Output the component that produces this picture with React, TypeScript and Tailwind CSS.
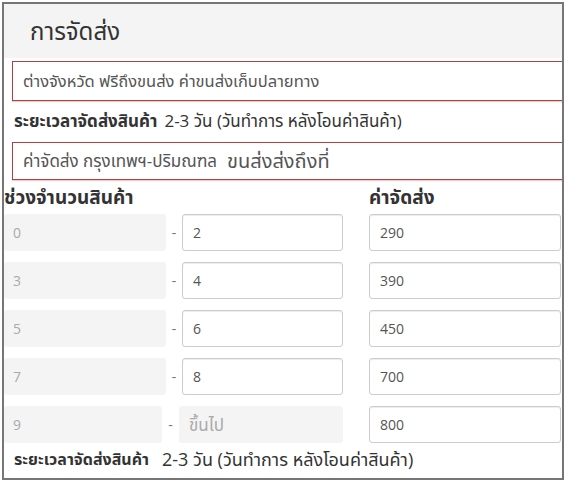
const rows = [
  { from: "0", to: "2", cost: "290" },
  { from: "3", to: "4", cost: "390" },
  { from: "5", to: "6", cost: "450" },
  { from: "7", to: "8", cost: "700" },
];

const font = "font-['Open_Sans','Noto_Sans_Thai','Noto_Sans',sans-serif]";

export default function App() {
  return (
    <div className={`w-[569px] h-[490px] bg-white ${font}`}>
      <div className="ml-[2px] mt-[2px] w-[562px] h-[478px] border-2 border-[#767676] overflow-hidden text-[#333]">
        {/* header */}
        <div className="h-[54px] bg-[#f4f4f4] pl-[26px] flex items-center text-[24px] text-[#333]">
          การจัดส่ง
        </div>

        <div className="ml-[8px] mt-[3px] w-[600px] h-[40px] border border-[#a94442] shadow-[0_1px_1px_rgba(169,68,66,0.25)] flex items-center pl-[10px] text-[16.5px] text-[#555]">
          ต่างจังหวัด ฟรีถึงขนส่ง ค่าขนส่งเก็บปลายทาง
        </div>

        <div className="ml-[10px] h-[40px] flex items-center">
          <span className="font-bold text-[17px]">ระยะเวลาจัดส่งสินค้า</span>
          <span className="ml-[7px] text-[17px]">2-3 วัน (วันทำการ หลังโอนค่าสินค้า)</span>
        </div>

        <div className="ml-[8px] mt-[1px] w-[600px] h-[38px] border border-[#a94442] shadow-[0_1px_1px_rgba(169,68,66,0.25)] flex items-center pl-[10px] text-[#555]">
          <span className="text-[17px]">ค่าจัดส่ง กรุงเทพฯ-ปริมณฑล</span>
          <span className="ml-[10px] text-[20px]">ขนส่งส่งถึงที่</span>
        </div>

        {/* table head */}
        <div className="flex h-[34px] items-center text-[19px] font-bold">
          <div className="w-[365px]">ช่วงจำนวนสินค้า</div>
          <div>ค่าจัดส่ง</div>
        </div>

        <div className="flex flex-col gap-[11px] text-[14px]">
          {rows.map((r) => (
            <div key={r.from} className="flex items-center h-[37px]">
              <div className="w-[162px] h-full bg-[#f4f4f4] rounded-[3px] flex items-center pl-[9px] text-[#aaa]">
                {r.from}
              </div>
              <div className="w-[16px] text-center text-[#777]">-</div>
              <div className="w-[161px] h-full bg-white border border-[#ccc] rounded-[3px] shadow-[inset_0_1px_1px_rgba(0,0,0,0.075)] flex items-center pl-[10px] text-[#555]">
                {r.to}
              </div>
              <div className="w-[26px]" />
              <div className="w-[192px] h-full bg-white border border-[#ccc] rounded-[3px] shadow-[inset_0_1px_1px_rgba(0,0,0,0.075)] flex items-center pl-[10px] text-[#555]">
                {r.cost}
              </div>
            </div>
          ))}
          <div className="flex items-center h-[37px]">
            <div className="w-[158px] h-full bg-[#f4f4f4] rounded-[3px] flex items-center pl-[9px] text-[#aaa]">
              9
            </div>
            <div className="w-[17px] text-center text-[#777]">-</div>
            <div className="w-[164px] h-full bg-[#f4f4f4] rounded-[3px] flex items-center pl-[10px] text-[17px] text-[#aaa]">
              ขึ้นไป
            </div>
            <div className="w-[26px]" />
            <div className="w-[192px] h-full bg-white border border-[#ccc] rounded-[3px] shadow-[inset_0_1px_1px_rgba(0,0,0,0.075)] flex items-center pl-[10px] text-[#555]">
              800
            </div>
          </div>
        </div>

        <div className="ml-[10px] h-[32px] flex items-center">
          <span className="font-bold text-[16px]">ระยะเวลาจัดส่งสินค้า</span>
          <span className="ml-[13px] text-[18px]">2-3 วัน (วันทำการ หลังโอนค่าสินค้า)</span>
        </div>
      </div>
    </div>
  );
}
